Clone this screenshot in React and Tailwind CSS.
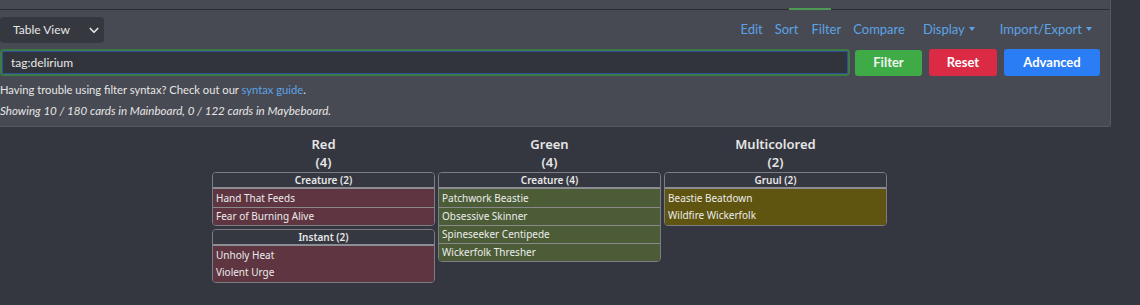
import React from "react";

const font = { fontFamily: '"Noto Sans", "Open Sans", Arial, sans-serif' };
const panelFont = { fontFamily: 'Lato, "Noto Sans", Arial, sans-serif' };

function Caret() {
  return <span className="inline-block ml-[4px] align-middle border-t-[4px] border-t-current border-x-[3px] border-x-transparent mb-[3px]" />;
}

function Box({ title, rows, color }) {
  return (
    <div className="rounded-[4px] border border-[#7b7d83] overflow-hidden">
      <div className="h-[16px] flex items-center justify-center text-[10px] font-semibold text-[#e8e8e8] bg-[#363841] border-b-2 border-[#8b8d92]">
        {title}
      </div>
      {rows.map((r, i) => (
        <div
          key={r}
          className={`h-[18px] flex items-center px-[3px] text-[10px] text-[#ececec] ${color} ${i > 0 ? "border-t border-[#8a8a8a]" : ""}`}
        >
          {r}
        </div>
      ))}
    </div>
  );
}

function BoxPlain({ title, rows, color }) {
  return (
    <div className="rounded-[4px] border border-[#7b7d83] overflow-hidden">
      <div className="h-[16px] flex items-center justify-center text-[10px] font-semibold text-[#e8e8e8] bg-[#363841] border-b-2 border-[#8b8d92]">
        {title}
      </div>
      <div className={`${color} py-[1px]`}>
        {rows.map((r) => (
          <div key={r} className="h-[17px] flex items-center px-[3px] text-[10px] text-[#ececec]">
            {r}
          </div>
        ))}
      </div>
    </div>
  );
}

function Column({ name, count, children }) {
  return (
    <div className="w-[223px] flex flex-col">
      <div className="text-center text-[13px] font-semibold text-[#e6e6e6] leading-[18px] pt-[135px]">{name}</div>
      <div className="text-center text-[13px] font-semibold text-[#e6e6e6] leading-[18px] mb-[1px]">({count})</div>
      <div className="flex flex-col gap-[3px]">{children}</div>
    </div>
  );
}

export default function App() {
  return (
    <div className="w-[1140px] h-[305px] bg-[#343740] relative overflow-hidden" style={font}>
      <div className="absolute left-0 top-0 w-[1111px] h-[127px] bg-[#474a52] border-r border-b border-[#55585f] rounded-br-[3px]" style={panelFont}>
        <div className="h-[10px] border-b border-[#2b2d33] relative">
          <div className="absolute left-[789px] bottom-[-1px] w-[42px] h-[2px] bg-[#4c9a52]" />
        </div>
        <div className="flex items-center h-[37px] pr-[18px]">
          <div className="ml-0 mt-[2px] w-[104px] h-[26px] rounded-[4px] bg-[#363840] flex items-center justify-between pl-[13px] pr-[4px] text-[12px] text-[#e6e6e6]">
            <span>Table View</span>
            <svg width="12" height="12" viewBox="0 0 16 16"><path d="M3 6l5 5 5-5" stroke="#e6e6e6" strokeWidth="2.2" fill="none" strokeLinecap="round" strokeLinejoin="round"/></svg>
          </div>
          <div className="flex-1" />
          <div className="flex items-center text-[13px] text-[#5ca3e6] mt-[2px]">
            <span className="mr-[12px]">Edit</span>
            <span className="mr-[13px]">Sort</span>
            <span className="mr-[12px]">Filter</span>
            <span className="mr-[18px]">Compare</span>
            <span className="mr-[25px]">Display<Caret /></span>
            <span>Import/Export<Caret /></span>
          </div>
        </div>
        <div className="flex items-center mt-[2px]">
          <div className="w-[850px] h-[27px] rounded-[4px] border-2 border-[#3c7a46] bg-[#32343b] shadow-[inset_0_0_0_1px_#2f4f9a] flex items-center pl-[9px] text-[12px] text-[#e8e8e8]">
            tag:delirium
          </div>
          <div className="ml-[5px] w-[67px] h-[26px] rounded-[3px] bg-[#3fab46] flex items-center justify-center text-[13px] font-bold text-[#eef5ee]">Filter</div>
          <div className="ml-[7px] w-[68px] h-[27px] rounded-[3px] bg-[#db2a43] flex items-center justify-center text-[13px] font-bold text-white">Reset</div>
          <div className="ml-[7px] w-[96px] h-[27px] rounded-[3px] bg-[#2a7df4] flex items-center justify-center text-[13px] font-bold text-white">Advanced</div>
        </div>
        <div className="mt-[5px] text-[11.2px] text-[#e6e6e6] leading-[18px]">
          Having trouble using filter syntax? Check out our <span className="text-[#5ca3e6]">syntax guide</span>.
        </div>
        <div className="mt-[3px] text-[11.6px] italic text-[#e6e6e6] leading-[18px]">
          Showing 10 / 180 cards in Mainboard, 0 / 122 cards in Maybeboard.
        </div>
      </div>
      <div className="flex gap-[3px] pl-[212px]">
        <Column name="Red" count={4}>
          <Box title="Creature (2)" rows={["Hand That Feeds", "Fear of Burning Alive"]} color="bg-[#5e3540]" />
          <BoxPlain title="Instant (2)" rows={["Unholy Heat", "Violent Urge"]} color="bg-[#5e3540]" />
        </Column>
        <Column name="Green" count={4}>
          <Box title="Creature (4)" rows={["Patchwork Beastie", "Obsessive Skinner", "Spineseeker Centipede", "Wickerfolk Thresher"]} color="bg-[#4b5c36]" />
        </Column>
        <Column name="Multicolored" count={2}>
          <BoxPlain title="Gruul (2)" rows={["Beastie Beatdown", "Wildfire Wickerfolk"]} color="bg-[#5f5410]" />
        </Column>
      </div>
    </div>
  );
}
